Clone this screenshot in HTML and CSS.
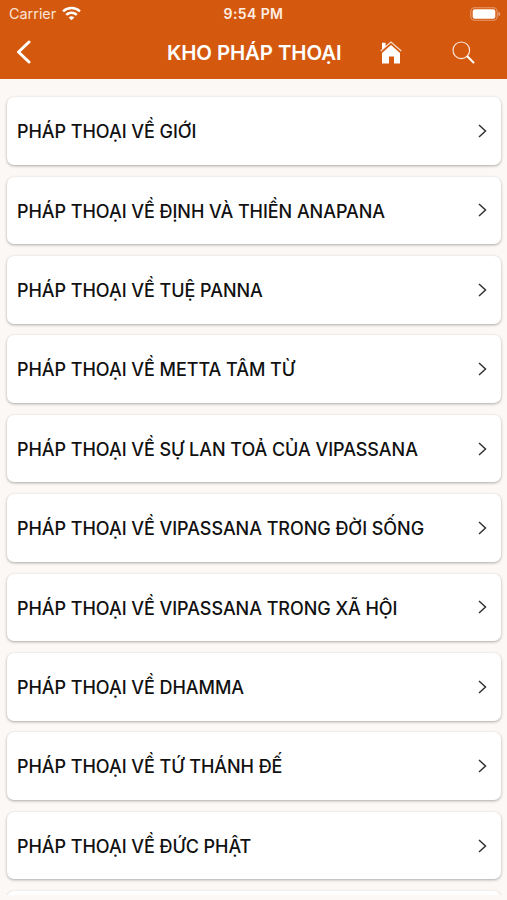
FILE: index.html
```
<!DOCTYPE html>
<html lang="vi">
<head>
    <meta charset="UTF-8">
    <meta name="viewport" content="width=device-width, initial-scale=1.0">
    <title>Kho Pháp Thoại</title>
    <link rel="stylesheet" href="styles.css">
</head>
<body>
    <header class="header">
        <div class="status-bar">
            <div class="carrier">
                <span>Carrier</span>
                <svg class="wifi" width="19" height="15" viewBox="0 0 18 14" fill="none" stroke="#fff" stroke-width="2.3">
                    <path d="M1 5.1a11.5 11.5 0 0 1 16 0"/>
                    <path d="M4 8.3a7.2 7.2 0 0 1 10 0"/>
                    <path d="M6.3 10.8a3.9 3.9 0 0 1 5.4 0L9 13.5z" fill="#fff" stroke="none"/>
                </svg>
            </div>
            <span class="time">9:54 PM</span>
            <svg class="battery" width="31" height="14" viewBox="0 0 31 14">
                <rect x="0.8" y="0.7" width="26.4" height="12.6" rx="3.8" fill="none" stroke="#fff" stroke-opacity="0.4" stroke-width="1.1"/>
                <rect x="2.7" y="2.3" width="22.6" height="9.4" rx="2" fill="#fff"/>
                <path d="M28.5 4.8c2.2.8 2.2 3.6 0 4.4z" fill="#fff" fill-opacity="0.5"/>
            </svg>
        </div>
        <div class="nav-bar">
            <button class="nav-button" aria-label="Back">
                <svg width="16" height="24" viewBox="0 0 16 24" fill="none" stroke="#fff" stroke-width="3" stroke-linecap="round" stroke-linejoin="round">
                    <path d="M14 2L3.500 12 14 22"/>
                </svg>
            </button>
            <h1>KHO PHÁP THOẠI</h1>
            <button class="nav-button home" aria-label="Home">
                <svg width="22" height="23" viewBox="0 0 22 23">
                    <path d="M2 1.8h3.6v3.4L2 8.4z" fill="#fff"/>
                    <path d="M11 4L20 12v10.4h-6V15.5H9v6.9H2V12z" fill="#fff"/>
                    <path d="M.7 10L11 1.1 21.3 10" fill="none" stroke="#fff" stroke-opacity="0.8" stroke-width="1.2"/>
                </svg>
            </button>
            <button class="nav-button search" aria-label="Search">
                <svg width="23" height="23" viewBox="0 0 23 23" fill="none" stroke="#fff">
                    <circle cx="9.3" cy="9.3" r="8.3" stroke-opacity="0.85" stroke-width="1.2"/>
                    <path d="M15.500 15.500l6 6" stroke-width="2" stroke-linecap="round"/>
                </svg>
            </button>
        </div>
    </header>

    <main class="list">
        <a class="card"><span>PHÁP THOẠI VỀ GIỚI</span><svg class="chevron" viewBox="0 0 9 14"><path d="M1 1l6.5 6L1 13"/></svg></a>
        <a class="card"><span>PHÁP THOẠI VỀ ĐỊNH VÀ THIỀN ANAPANA</span><svg class="chevron" viewBox="0 0 9 14"><path d="M1 1l6.5 6L1 13"/></svg></a>
        <a class="card"><span>PHÁP THOẠI VỀ TUỆ PANNA</span><svg class="chevron" viewBox="0 0 9 14"><path d="M1 1l6.5 6L1 13"/></svg></a>
        <a class="card"><span>PHÁP THOẠI VỀ METTA TÂM TỪ</span><svg class="chevron" viewBox="0 0 9 14"><path d="M1 1l6.5 6L1 13"/></svg></a>
        <a class="card"><span>PHÁP THOẠI VỀ SỰ LAN TOẢ CỦA VIPASSANA</span><svg class="chevron" viewBox="0 0 9 14"><path d="M1 1l6.5 6L1 13"/></svg></a>
        <a class="card"><span>PHÁP THOẠI VỀ VIPASSANA TRONG ĐỜI SỐNG</span><svg class="chevron" viewBox="0 0 9 14"><path d="M1 1l6.5 6L1 13"/></svg></a>
        <a class="card"><span>PHÁP THOẠI VỀ VIPASSANA TRONG XÃ HỘI</span><svg class="chevron" viewBox="0 0 9 14"><path d="M1 1l6.5 6L1 13"/></svg></a>
        <a class="card"><span>PHÁP THOẠI VỀ DHAMMA</span><svg class="chevron" viewBox="0 0 9 14"><path d="M1 1l6.5 6L1 13"/></svg></a>
        <a class="card"><span>PHÁP THOẠI VỀ TỨ THÁNH ĐẾ</span><svg class="chevron" viewBox="0 0 9 14"><path d="M1 1l6.5 6L1 13"/></svg></a>
        <a class="card"><span>PHÁP THOẠI VỀ ĐỨC PHẬT</span><svg class="chevron" viewBox="0 0 9 14"><path d="M1 1l6.5 6L1 13"/></svg></a>
        <a class="card"></a>
    </main>
</body>
</html>
```
FILE: styles.css
```
* {
    box-sizing: border-box;
}

body {
    font-family: Inter, "Liberation Sans", sans-serif;
    margin: 0;
    height: 100vh;
    padding-bottom: 5px;
    display: flex;
    flex-direction: column;
    overflow: hidden;
    background-color: #fbf8f5;
    color: #111111;
}

.header {
    flex: none;
    height: 79px;
    background-color: #d4590f;
    color: #ffffff;
}

.status-bar {
    display: grid;
    grid-template-columns: 1fr auto 1fr;
    align-items: center;
    height: 27px;
    padding: 0 6px 0 9px;
    font-size: 14px;
}

.carrier {
    display: flex;
    align-items: center;
    gap: 6px;
    color: #fbe3d5;
    font-size: 14.4px;
}

.time {
    margin-right: 3px;
    color: #fdeee4;
    font-size: 14px;
    font-weight: 600;
    letter-spacing: 0.4px;
}

.battery {
    justify-self: end;
}

.nav-bar {
    display: flex;
    align-items: center;
    height: 50px;
    padding: 0 32px 0 15px;
}

h1 {
    width: 175px;
    margin: 0 0 0 136px;
    font-size: 20.4px;
    font-weight: 600;
    letter-spacing: -0.1px;
    white-space: nowrap;
}

.nav-button {
    display: flex;
    padding: 0;
    border: none;
    background: none;
    cursor: pointer;
}

.home {
    margin-left: 38px;
}

.search {
    margin-left: auto;
}

.list {
    flex: 1;
    min-height: 0;
    overflow: hidden;
    display: flex;
    flex-direction: column;
    gap: 11.9px;
    padding: 18.3px 6px 0 7px;
}

.card {
    flex: none;
    display: flex;
    align-items: center;
    justify-content: space-between;
    height: 67.5px;
    padding: 0 14px 0 10px;
    border-radius: 7px;
    background-color: #ffffff;
    box-shadow: 0 1px 3px rgba(0, 0, 0, 0.32);
    font-size: 18px;
    font-weight: 500;
    letter-spacing: -0.05px;
    white-space: nowrap;
}

.card span {
    padding-top: 1.5px;
}

.chevron {
    width: 9px;
    height: 14px;
    fill: none;
    stroke: #333333;
    stroke-width: 1.5;
}
```
